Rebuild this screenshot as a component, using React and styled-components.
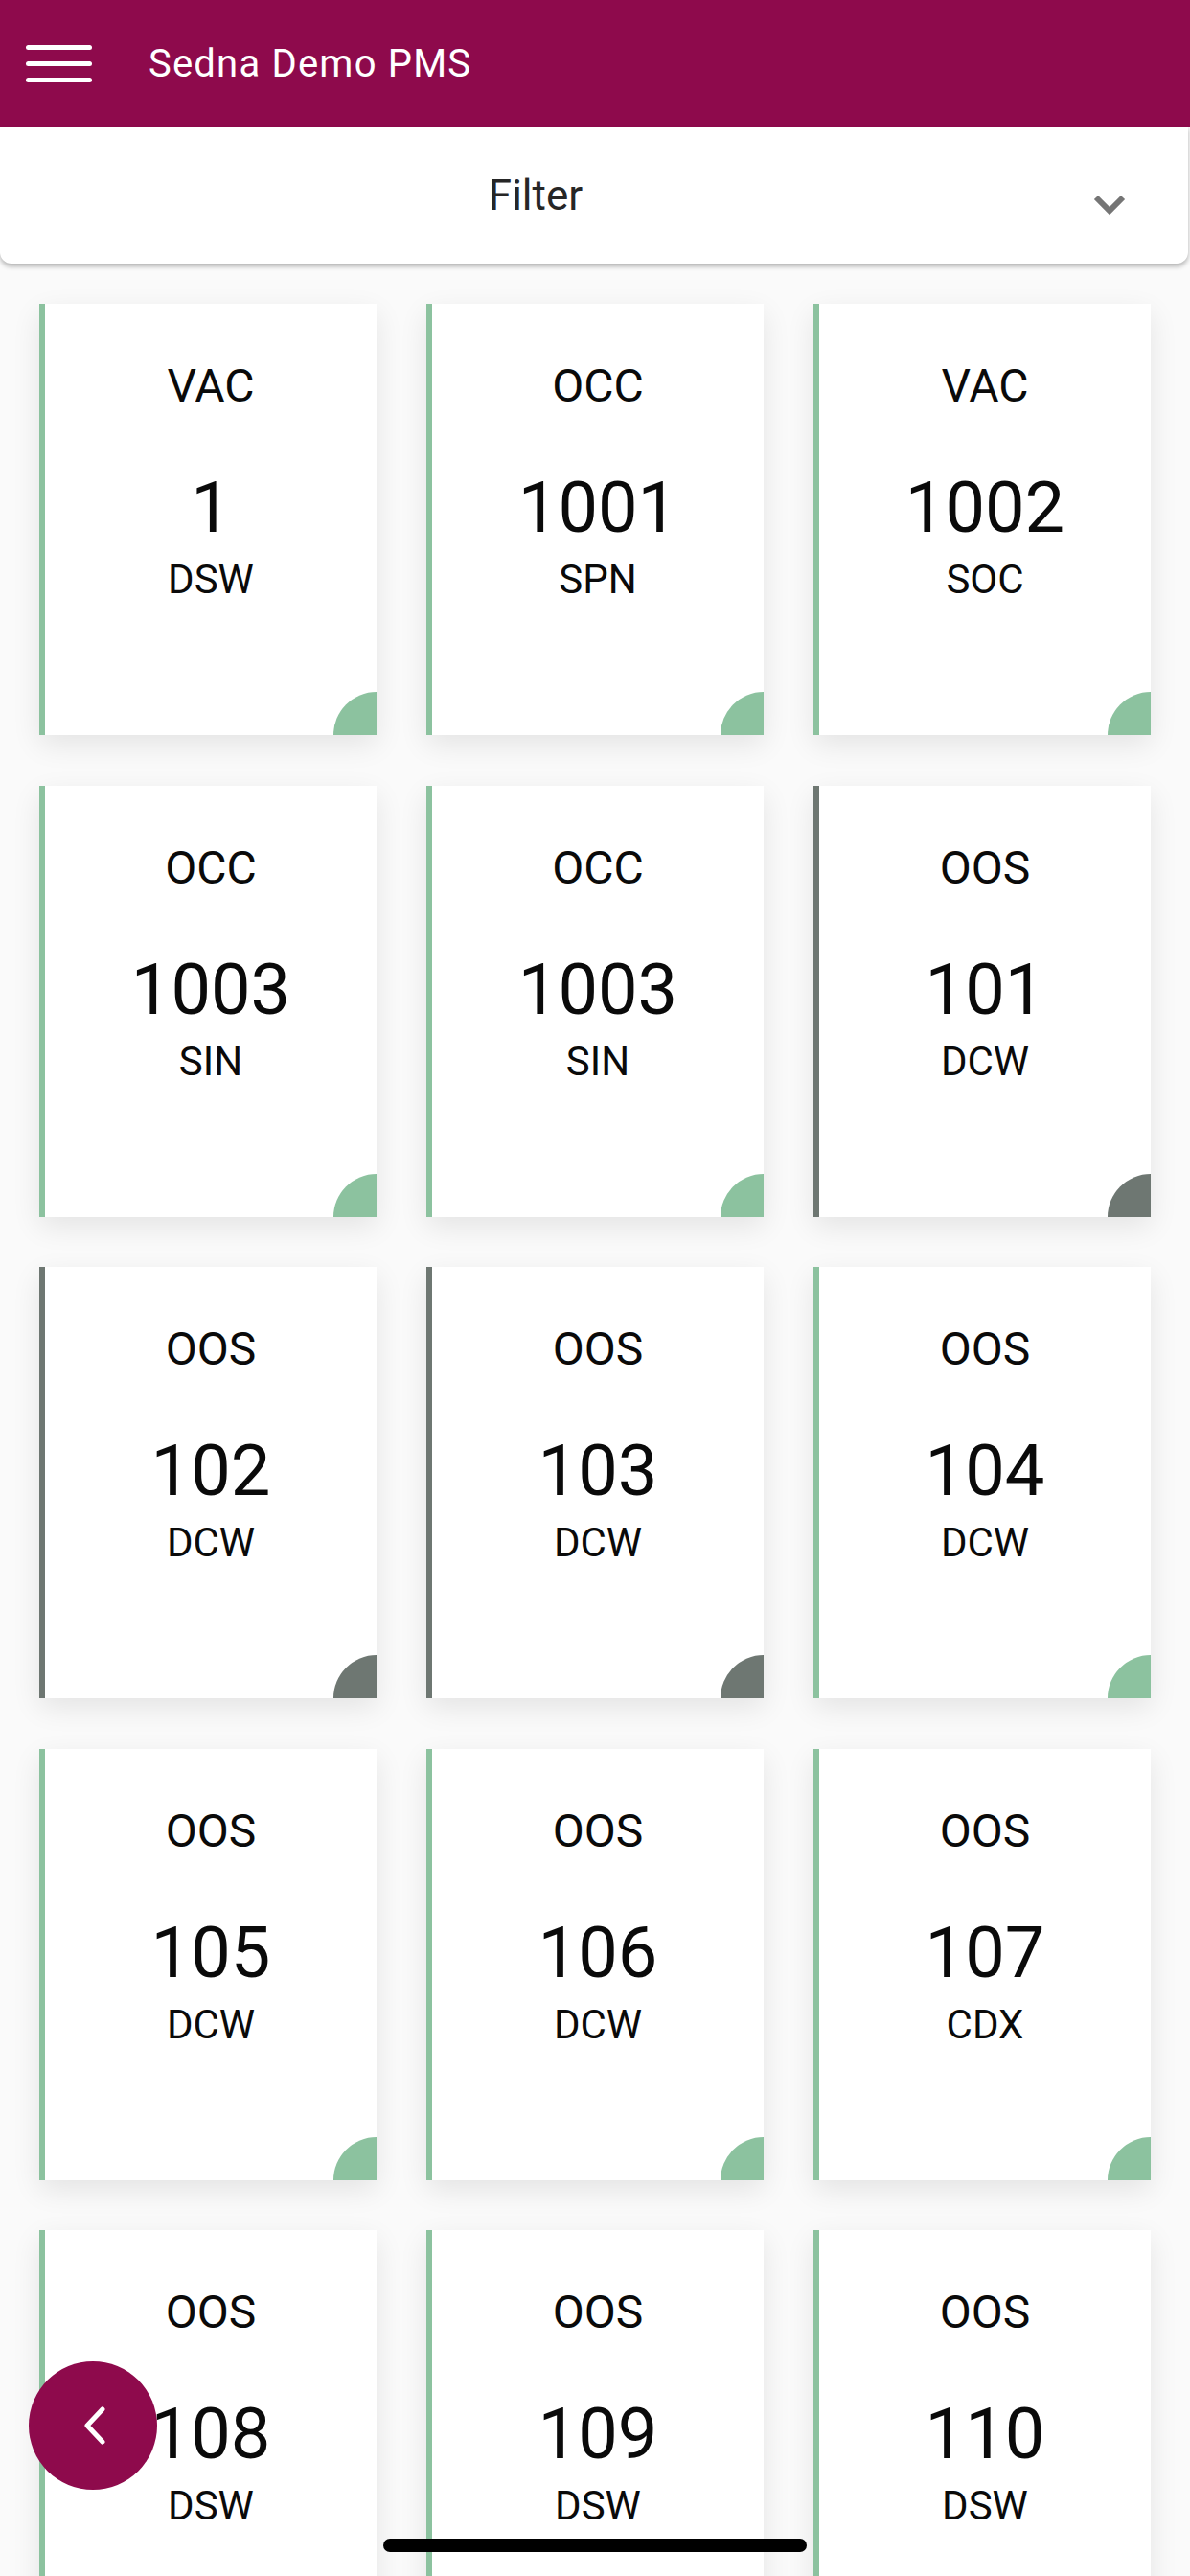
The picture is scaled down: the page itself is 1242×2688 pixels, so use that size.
import React from "react";
import styled, { createGlobalStyle } from "styled-components";

const rooms = [
  { status: "VAC", no: "1", type: "DSW", state: "clean" },
  { status: "OCC", no: "1001", type: "SPN", state: "clean" },
  { status: "VAC", no: "1002", type: "SOC", state: "clean" },
  { status: "OCC", no: "1003", type: "SIN", state: "clean" },
  { status: "OCC", no: "1003", type: "SIN", state: "clean" },
  { status: "OOS", no: "101", type: "DCW", state: "out" },
  { status: "OOS", no: "102", type: "DCW", state: "out" },
  { status: "OOS", no: "103", type: "DCW", state: "out" },
  { status: "OOS", no: "104", type: "DCW", state: "clean" },
  { status: "OOS", no: "105", type: "DCW", state: "clean" },
  { status: "OOS", no: "106", type: "DCW", state: "clean" },
  { status: "OOS", no: "107", type: "CDX", state: "clean" },
  { status: "OOS", no: "108", type: "DSW", state: "clean" },
  { status: "OOS", no: "109", type: "DSW", state: "clean" },
  { status: "OOS", no: "110", type: "DSW", state: "clean" },
];

const stateColors = {
  clean: "#8cc29f",
  out: "#6e7772",
};

const App = () => {
  return (
    <>
      <GlobalStyle />
      <Shell>
        <TopBar>
          <MenuButton aria-label="menu">
            <MenuLine />
            <MenuLine />
            <MenuLine />
          </MenuButton>
          <Title>Sedna Demo PMS</Title>
        </TopBar>

        <FilterBar>
          <FilterLabel>Filter</FilterLabel>
          <FilterToggle>
            <svg width="34" height="22" viewBox="0 0 34 22">
              <polyline
                points="3,3 17,17 31,3"
                fill="none"
                stroke="#757575"
                strokeWidth="6"
              />
            </svg>
          </FilterToggle>
        </FilterBar>

        <Content>
          <RoomGrid>
            {rooms.map((room, i) => (
              <RoomCard key={i} $color={stateColors[room.state]}>
                <Status>{room.status}</Status>
                <RoomNo>{room.no}</RoomNo>
                <RoomType>{room.type}</RoomType>
                <Corner $color={stateColors[room.state]} />
              </RoomCard>
            ))}
          </RoomGrid>
        </Content>

        <BackFab aria-label="back">
          <svg width="24" height="40" viewBox="0 0 24 40">
            <polyline
              points="20,3 4,20 20,37"
              fill="none"
              stroke="#fff"
              strokeWidth="5"
              strokeLinecap="round"
              strokeLinejoin="round"
            />
          </svg>
        </BackFab>
        <HomeIndicator />
      </Shell>
    </>
  );
};

const GlobalStyle = createGlobalStyle`
  * {
    box-sizing: border-box;
  }
  body {
    margin: 0;
    background: #fafafa;
    font-family: Roboto, "Liberation Sans", sans-serif;
  }
`;

const Shell = styled.div`
  height: 100vh;
  display: flex;
  flex-direction: column;
  overflow: hidden;
  background: #fafafa;
`;

const TopBar = styled.header`
  height: 132px;
  flex-shrink: 0;
  display: flex;
  align-items: center;
  padding-left: 27px;
  background: #8e0a4c;
`;

const MenuButton = styled.div`
  width: 69px;
  display: flex;
  flex-direction: column;
  gap: 12px;
`;

const MenuLine = styled.span`
  display: block;
  height: 5px;
  border-radius: 3px;
  background: #fff;
`;

const Title = styled.h1`
  margin: 0 0 0 59px;
  font-size: 40px;
  font-weight: 400;
  color: #fff;
  letter-spacing: 1.2px;
`;

const FilterBar = styled.div`
  position: relative;
  z-index: 2;
  height: 143px;
  flex-shrink: 0;
  margin-right: 2px;
  display: flex;
  align-items: center;
  background: #fff;
  border-radius: 0 0 12px 12px;
  box-shadow: 0 3px 5px rgba(0, 0, 0, 0.28);
`;

const FilterLabel = styled.div`
  flex: 1;
  text-align: center;
  font-size: 44px;
  color: #262626;
`;

const FilterToggle = styled.div`
  width: 80px;
  margin-right: 42px;
  margin-top: 20px;
  display: flex;
  justify-content: center;
`;

const Content = styled.main`
  flex: 1;
  overflow-y: auto;
  scrollbar-width: none;
  padding: 42px 41px;

  &::-webkit-scrollbar {
    display: none;
  }
`;

const RoomGrid = styled.div`
  display: grid;
  grid-template-columns: repeat(3, 352px);
  grid-auto-rows: 450px;
  column-gap: 52px;
  row-gap: 52.5px;
`;

const RoomCard = styled.div`
  position: relative;
  overflow: hidden;
  display: flex;
  flex-direction: column;
  align-items: center;
  padding-top: 62px;
  background: #fff;
  border-left: 6px solid ${(p) => p.$color};
  box-shadow: 0 10px 28px rgba(0, 0, 0, 0.09);
  color: #0a0a0a;
`;

const Status = styled.div`
  font-size: 48px;
  line-height: 1;
`;

const RoomNo = styled.div`
  margin-top: 66px;
  font-size: 74px;
  line-height: 1;
`;

const RoomType = styled.div`
  margin-top: 17px;
  font-size: 42px;
  line-height: 1;
`;

const Corner = styled.span`
  position: absolute;
  right: 0;
  bottom: 0;
  width: 45px;
  height: 45px;
  border-top-left-radius: 45px;
  background: ${(p) => p.$color};
`;

const BackFab = styled.button`
  position: fixed;
  left: 30px;
  bottom: 90px;
  width: 134px;
  height: 134px;
  padding: 0 0 0 4px;
  border: none;
  border-radius: 50%;
  background: #8e0a4c;
  display: flex;
  align-items: center;
  justify-content: center;
  cursor: pointer;
`;

const HomeIndicator = styled.div`
  position: fixed;
  left: 50%;
  bottom: 25px;
  width: 442px;
  height: 14px;
  margin-left: -221px;
  border-radius: 7px;
  background: #000;
`;

export default App;
